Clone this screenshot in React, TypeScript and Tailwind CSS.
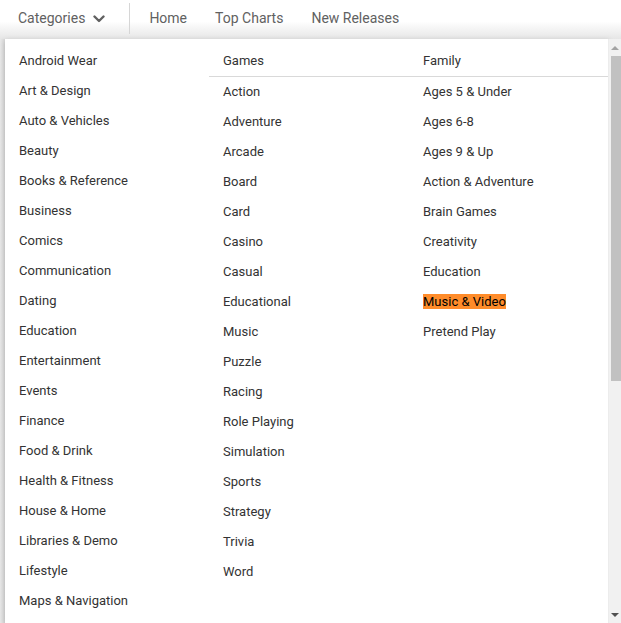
import React from 'react';

const appCategories = [
  'Android Wear', 'Art & Design', 'Auto & Vehicles', 'Beauty', 'Books & Reference', 'Business',
  'Comics', 'Communication', 'Dating', 'Education', 'Entertainment', 'Events', 'Finance',
  'Food & Drink', 'Health & Fitness', 'House & Home', 'Libraries & Demo', 'Lifestyle',
  'Maps & Navigation',
];

const gameCategories = [
  'Action', 'Adventure', 'Arcade', 'Board', 'Card', 'Casino', 'Casual', 'Educational', 'Music',
  'Puzzle', 'Racing', 'Role Playing', 'Simulation', 'Sports', 'Strategy', 'Trivia', 'Word',
];

const familyCategories = [
  'Ages 5 & Under', 'Ages 6-8', 'Ages 9 & Up', 'Action & Adventure', 'Brain Games', 'Creativity',
  'Education', 'Music & Video', 'Pretend Play',
];

const ACTIVE = 'Music & Video';

const Item: React.FC<{ label: string }> = ({ label }) => (
  <li className="h-[30px] leading-[30px] px-[14px] whitespace-nowrap">
    {label === ACTIVE ? <span className="bg-[#ff8c2a] text-black">{label}</span> : label}
  </li>
);

const Chevron = () => (
  <svg width="12" height="8" viewBox="0 0 12 8" className="text-[#616161]">
    <path d="M1.5 1.5 L6 6 L10.5 1.5" fill="none" stroke="currentColor" strokeWidth="2.4" strokeLinecap="round" strokeLinejoin="round" />
  </svg>
);

const App: React.FC = () => {
  return (
    <div className="w-[621px] h-[623px] overflow-hidden bg-[#ececec] font-['Roboto',sans-serif]">
      {/* top nav */}
      <div className="h-[39px] flex items-start bg-gradient-to-b from-white from-55% to-[#e6e6e6] text-[14px] text-[#616161]">
        <div className="flex items-center gap-[8px] pl-[18px] pr-[24px] h-[31px] mt-[3px] border-r border-[#d6d6d6]">
          <span>Categories</span>
          <Chevron />
        </div>
        <div className="flex items-center h-[31px] mt-[3px] pl-[19px] gap-[28px]">
          <span>Home</span>
          <span>Top Charts</span>
          <span>New Releases</span>
        </div>
      </div>

      {/* dropdown */}
      <div className="flex h-[584px] bg-gradient-to-r from-[#e9e9e9] to-[#d9d9d9] bg-[length:5px_100%] bg-no-repeat pl-[5px]">
        <div className="flex flex-1 bg-white shadow-[0_2px_6px_rgba(0,0,0,0.2)] overflow-hidden border-r border-[#ececec]">
          <ul className="w-[204px] pt-[7px] text-[13px] text-[#333]">
            {appCategories.map((c) => (
              <Item key={c} label={c} />
            ))}
          </ul>
          <div className="flex-1 pt-[7px] text-[13px] text-[#333]">
            <div className="flex border-b border-[#d9d9d9]">
              <div className="w-[200px] h-[30px] leading-[30px] px-[14px]">Games</div>
              <div className="flex-1 h-[30px] leading-[30px] px-[14px]">Family</div>
            </div>
            <div className="flex">
              <ul className="w-[200px]">
                {gameCategories.map((c) => (
                  <Item key={c} label={c} />
                ))}
              </ul>
              <ul className="flex-1">
                {familyCategories.map((c) => (
                  <Item key={c} label={c} />
                ))}
              </ul>
            </div>
          </div>
        </div>

        {/* scrollbar */}
        <div className="w-[12px] bg-[#f1f1f1] flex flex-col items-center">
          <div className="h-[16px] flex items-center justify-center mt-[1px]">
            <div className="w-0 h-0 border-l-[4px] border-r-[4px] border-b-[4px] border-l-transparent border-r-transparent border-b-[#a3a3a3]" />
          </div>
          <div className="w-[10px] ml-[2px] h-[325px] bg-[#c1c1c1]" />
          <div className="flex-1" />
          <div className="h-[16px] flex items-center justify-center">
            <div className="w-0 h-0 border-l-[4px] border-r-[4px] border-t-[4px] border-l-transparent border-r-transparent border-t-[#505050]" />
          </div>
        </div>
      </div>
    </div>
  );
};

export default App;
